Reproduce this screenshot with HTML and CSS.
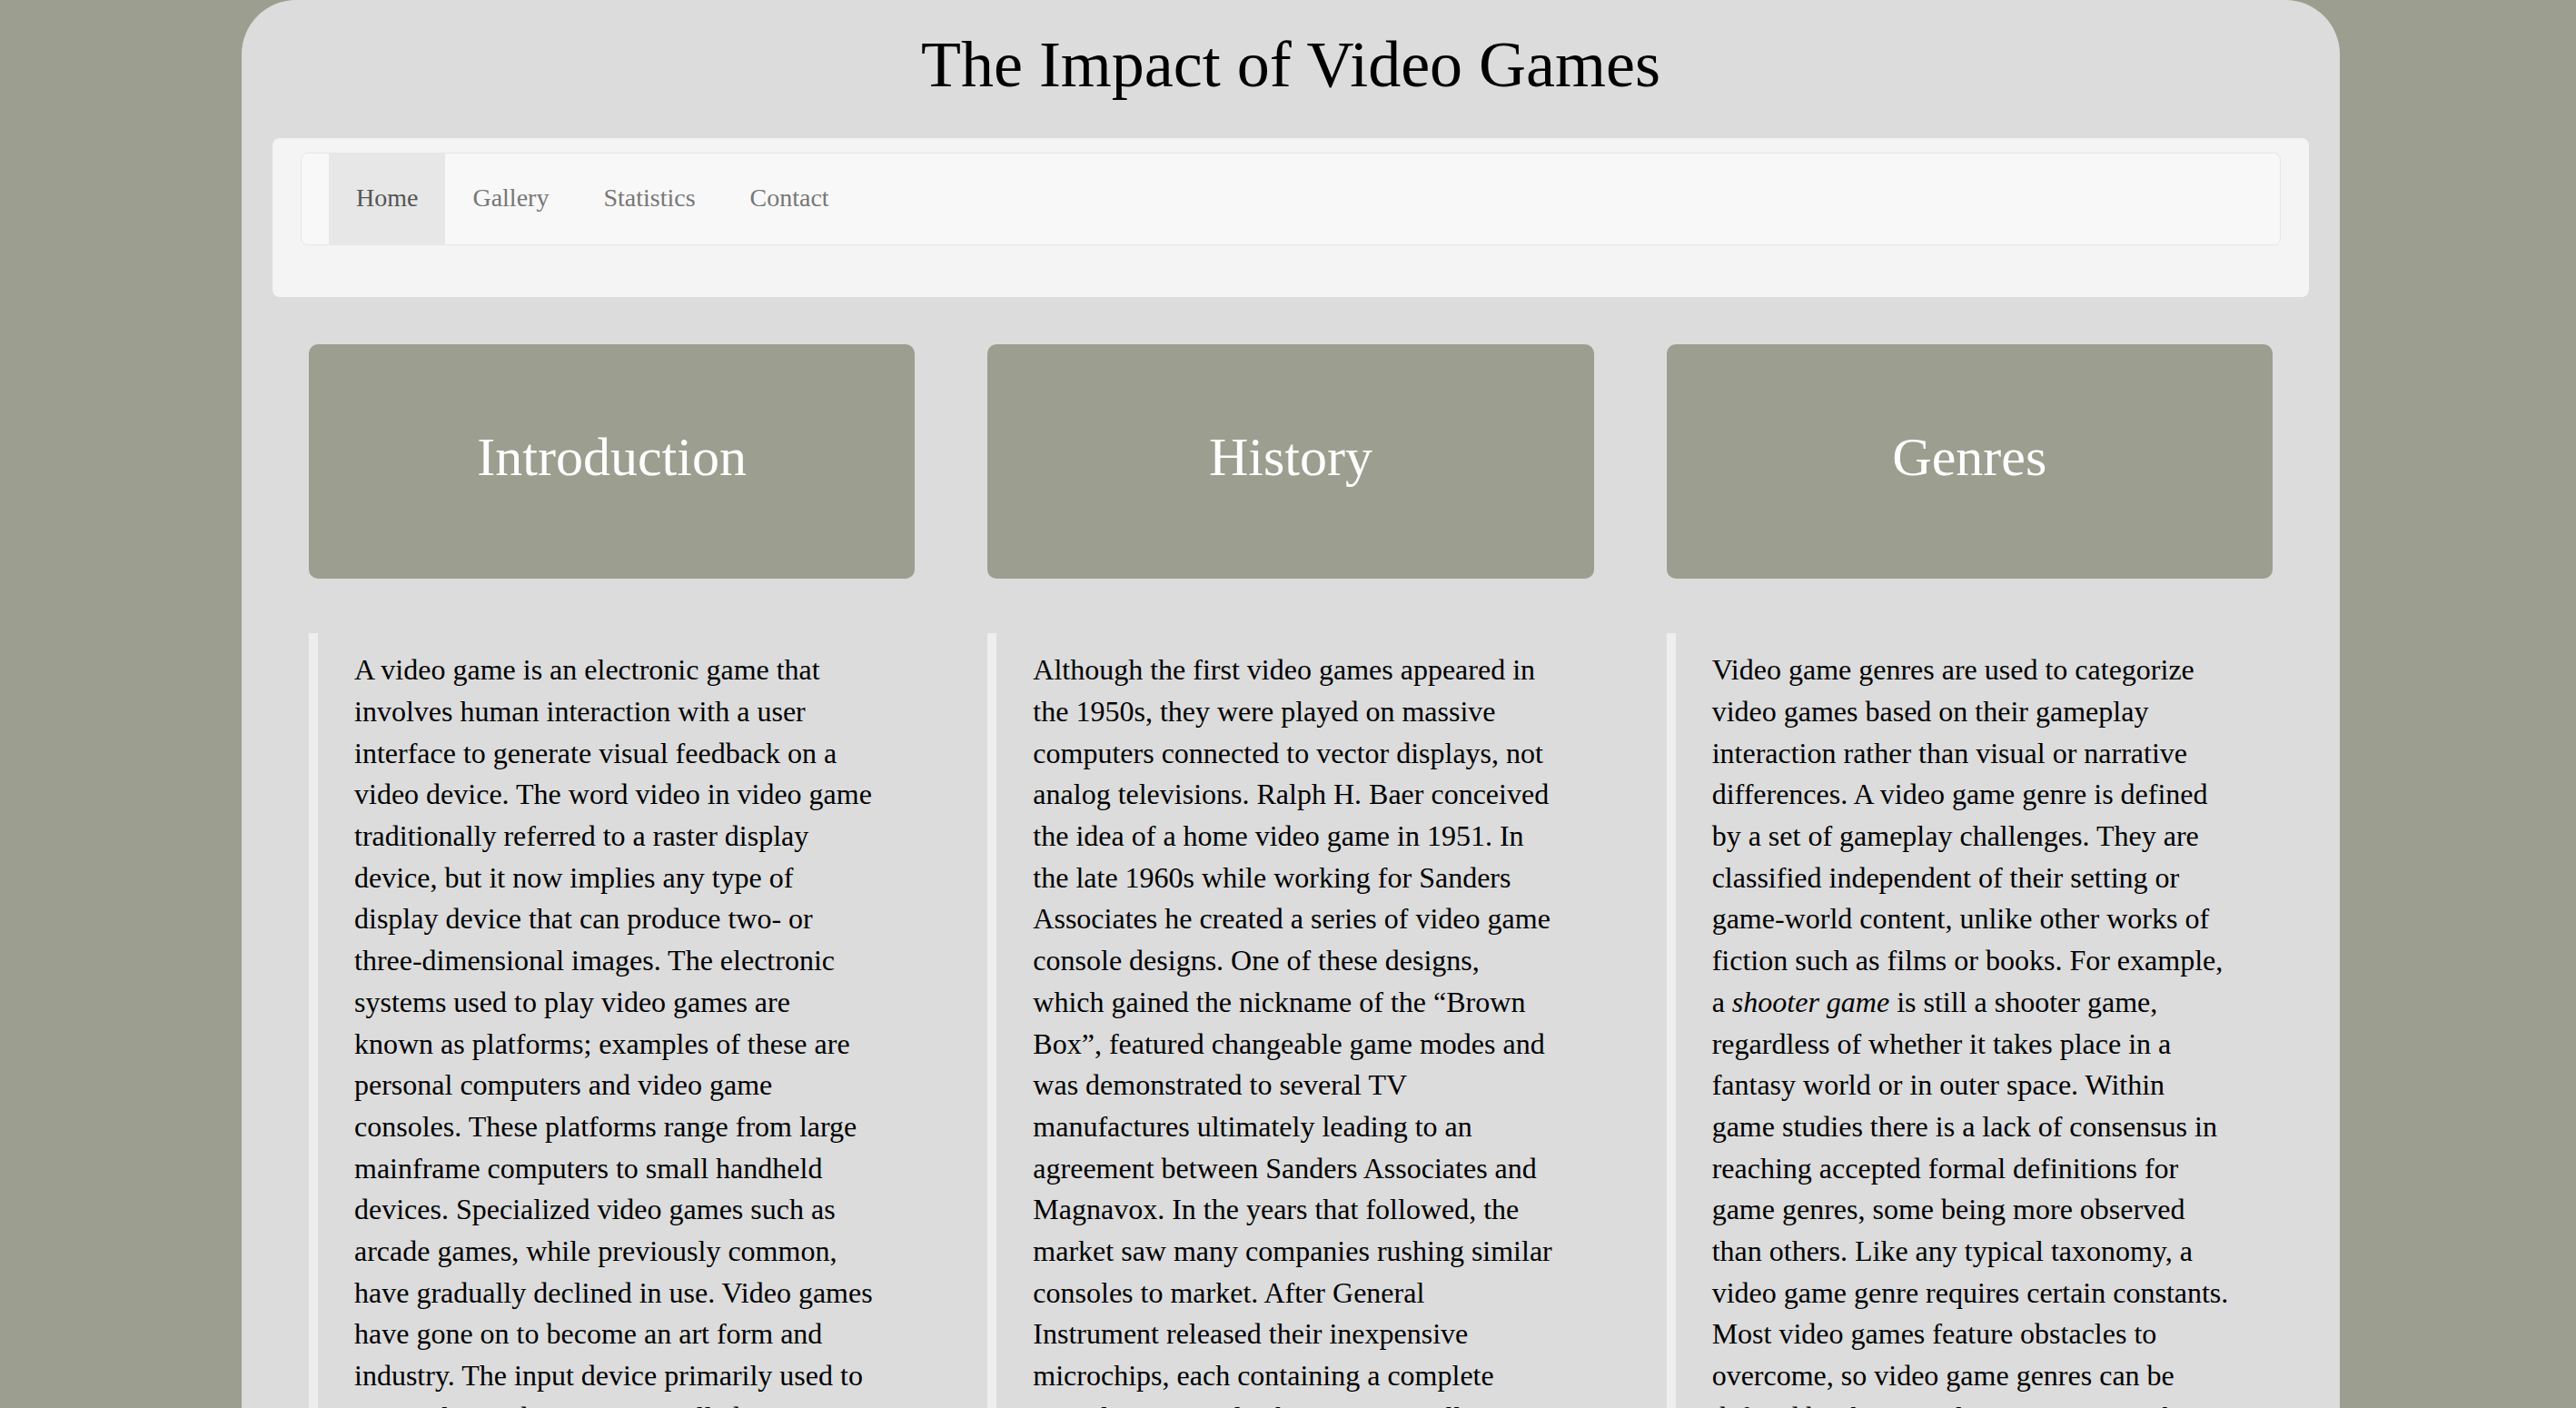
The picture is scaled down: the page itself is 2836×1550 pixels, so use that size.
FILE: index.html
```html
<!DOCTYPE html>
<html lang="en">
<head>
<meta charset="utf-8">
<title>The Impact of Video Games</title>
<link rel="stylesheet" href="styles.css">
</head>
<body>
<div class="page">
  <h1 class="title">The Impact of Video Games</h1>
  <div class="panel">
    <nav class="navbar">
      <a class="nav-link active" href="#">Home</a>
      <a class="nav-link" href="#">Gallery</a>
      <a class="nav-link" href="#">Statistics</a>
      <a class="nav-link" href="#">Contact</a>
    </nav>
  </div>
  <div class="cards">
    <div class="col">
      <div class="card"><h2>Introduction</h2></div>
      <blockquote class="quote"><p>A video game is an electronic game that involves human interaction with a user interface to generate visual feedback on a video device. The word video in video game traditionally referred to a raster display device, but it now implies any type of display device that can produce two- or three-dimensional images. The electronic systems used to play video games are known as platforms; examples of these are personal computers and video game consoles. These platforms range from large mainframe computers to small handheld devices. Specialized video games such as arcade games, while previously common, have gradually declined in use. Video games have gone on to become an art form and industry. The input device primarily used to manipulate video games is called a game controller, and varies across platforms. For example, a dedicated console controller might consist of only a button and a joystick, while another may feature a dozen buttons and one or more joysticks.</p></blockquote>
    </div>
    <div class="col">
      <div class="card"><h2>History</h2></div>
      <blockquote class="quote"><p>Although the first video games appeared in the 1950s, they were played on massive computers connected to vector displays, not analog televisions. Ralph H. Baer conceived the idea of a home video game in 1951. In the late 1960s while working for Sanders Associates he created a series of video game console designs. One of these designs, which gained the nickname of the “Brown Box”, featured changeable game modes and was demonstrated to several TV manufactures ultimately leading to an agreement between Sanders Associates and Magnavox. In the years that followed, the market saw many companies rushing similar consoles to market. After General Instrument released their inexpensive microchips, each containing a complete console on a single chip, many small developers began releasing consoles that looked different externally, but internally were playing exactly the same games.</p></blockquote>
    </div>
    <div class="col">
      <div class="card"><h2>Genres</h2></div>
      <blockquote class="quote"><p>Video game genres are used to categorize video games based on their gameplay interaction rather than visual or narrative differences. A video game genre is defined by a set of gameplay challenges. They are classified independent of their setting or game-world content, unlike other works of fiction such as films or books. For example, a <em>shooter game</em> is still a shooter game, regardless of whether it takes place in a fantasy world or in outer space. Within game studies there is a lack of consensus in reaching accepted formal definitions for game genres, some being more observed than others. Like any typical taxonomy, a video game genre requires certain constants. Most video games feature obstacles to overcome, so video game genres can be defined by the way players overcome them.</p></blockquote>
    </div>
  </div>
</div>
</body>
</html>
```

FILE: styles.css
```css
html, body {
  margin: 0;
  padding: 0;
}

body {
  background: #9c9e8f;
  font-family: "Liberation Serif", "Times New Roman", serif;
  color: #000;
}

.page {
  box-sizing: border-box;
  width: 2310px;
  margin-left: 266px;
  padding: 0 34px 60px;
  background: #dcdcdc;
  border-radius: 60px 60px 0 0;
}

.title {
  margin: 0;
  padding: 32px 0 41px;
  font-size: 72px;
  line-height: 1.1;
  font-weight: normal;
  text-align: center;
}

.panel {
  background: #f4f4f4;
  border-radius: 8px;
  padding: 16px 31px 57px;
}

.navbar {
  display: flex;
  background: #f8f8f8;
  border: 1px solid #e7e7e7;
  border-radius: 8px;
  padding: 0 30px;
}

.nav-link {
  display: block;
  padding: 29px 30px 31px;
  font-size: 28px;
  line-height: 40px;
  color: #777;
  text-decoration: none;
}

.nav-link.active {
  background: #e7e7e7;
  color: #555;
}

.cards {
  display: grid;
  grid-template-columns: repeat(3, 1fr);
  margin-top: 52px;
}

.col {
  padding: 0 40px;
}

.card {
  box-sizing: border-box;
  height: 258px;
  background: #9c9e8f;
  border-radius: 10px;
  display: flex;
  align-items: center;
  justify-content: center;
  padding-bottom: 10px;
}

.card h2 {
  margin: 0;
  color: #fff;
  font-size: 60px;
  line-height: 1.1;
  font-weight: normal;
}

.quote {
  margin: 60px 0 0;
  border-left: 10px solid #eeeeee;
  padding: 18px 43.5px 18px 40px;
  font-size: 32px;
  line-height: 1.42857;
}

.quote p {
  margin: 0;
}
```
